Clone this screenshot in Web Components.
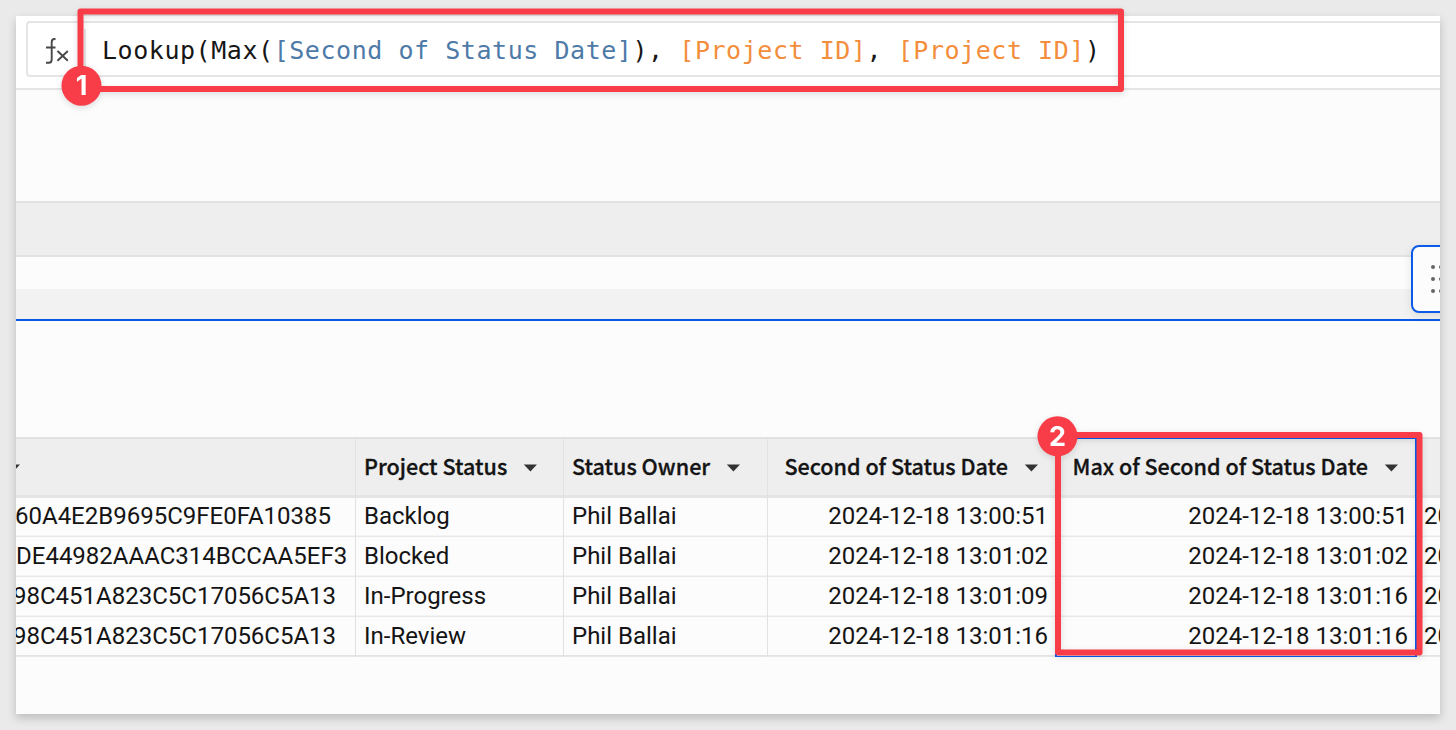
<!DOCTYPE html>
<html lang="en">
<head>
<meta charset="utf-8">
<title>Formula lookup</title>
<style>
html, body { margin: 0; height: 100%; overflow: hidden; background: #eaeaea; }
</style>
</head>
<body>
<app-page></app-page>
<script>
const define = (name, html, setup) => customElements.define(name, class extends HTMLElement {
  connectedCallback() {
    if (this.shadowRoot) return;
    const root = this.attachShadow({ mode: 'open' });
    root.innerHTML = html.trim();
    if (setup) setup(this, root);
  }
});

define('fx-icon', `
<style>:host{display:block;width:26px;height:30px} svg{display:block}</style>
<svg width="26" height="30" viewBox="0 0 26 30" fill="none" stroke="#484848" stroke-width="1.9">
<path d="M10.500 2H9.500C7.600 2 6.700 3 6.700 5v17.500c0 2.300-.9 3.300-2.800 3.300H1M1 10.500h9.500"/>
<path d="M12.500 14l10.300 9.800M22.800 14l-10.300 9.800"/>
</svg>`);

define('formula-bar', `
<style>
:host{display:flex;box-sizing:border-box;height:74px;padding:5px 0 11px 10px;background:#fff;border-bottom:2px solid #e5e5e5}
.field{flex:1;display:flex;align-items:stretch;border:2px solid #e5e5e5;border-right:0;border-radius:4px 0 0 4px}
.fx{width:58px;box-sizing:border-box;margin:6px 0;height:42px;padding:8px 0 0 17px;border-right:2px solid #e5e5e5}
.code{padding-left:16px;font:25px/52px "DejaVu Sans Mono",monospace;letter-spacing:.55px;color:#161616;white-space:pre;margin-top:2px;height:50px}
</style>
<div class="field"><div class="fx"><fx-icon></fx-icon></div><div class="code"><slot></slot></div></div>`);

define('formula-ref', `
<style>:host{display:inline;color:#4e7aa8} :host([tone=orange]){color:#f28e3c}</style><slot></slot>`);

define('drag-handle', `
<style>
:host{display:block;box-sizing:border-box;width:60px;height:68px;border:2px solid #0b5be8;border-radius:8px;background:#fcfcfc;box-shadow:0 3px 10px rgba(0,0,0,.1);padding:18px 0 0 18px}
svg{display:block}</style>
<svg width="20" height="30" fill="#666"><circle cx="2" cy="2" r="2"/><circle cx="2" cy="14" r="2"/><circle cx="2" cy="26" r="2"/><circle cx="10" cy="2" r="2"/><circle cx="10" cy="14" r="2"/><circle cx="10" cy="26" r="2"/></svg>`);

define('canvas-bands', `
<style>
:host{display:flex;flex-direction:column;height:347px;position:relative}
.a{height:111px}
.b{height:52px;background:#eee;border:solid #e2e2e2;border-width:2px 0}
.c{height:32px}
.d{height:30px;background:#f2f2f2;border-bottom:2px solid #0b58e2}
drag-handle{position:absolute;left:1395px;top:155px}
</style>
<div class="a"></div><div class="b"></div><div class="c"></div><div class="d"></div>
<drag-handle></drag-handle>`);

define('header-cell', `
<style>
:host{display:flex;align-items:center;justify-content:var(--just,flex-start);box-sizing:border-box;height:56px;font:500 21.55px/54px "Noto Sans CJK SC",sans-serif;-webkit-text-stroke:.3px #141414;color:#141414;white-space:nowrap;gap:16px;padding:0 0 0 8px}
svg{display:block;flex:none;margin-top:1px}
.t{height:56px}
</style>
<div class="t"><slot></slot></div>
<svg width="15" height="8" fill="#333"><path d="M.8.500h13.200L7.400 7.500z"/></svg>`);

define('data-cell', `
<style>
:host{display:flex;justify-content:var(--just,flex-start);box-sizing:border-box;height:40px;padding:0 8px;font:24px/39px Roboto,sans-serif;color:#141414;white-space:nowrap;border-bottom:1px solid #e8e8e8;box-shadow:inset 0 -1px #f4f4f4}
:host(:last-child){border-color:#e8e8e8;box-shadow:inset 0 -1px #e4e4e4}
</style><slot></slot>`);

define('table-column', `
<style>
:host{display:block;box-sizing:border-box;flex:none;overflow:hidden;border-right:1px solid #e2e2e2}
:host([align=right]){--just:flex-end}
.head{background:#eee;border-top:2px solid #e2e2e2;border-bottom:3px solid #e4e4e4;margin-bottom:-1px;height:56px}
</style>
<div class="head"><slot name="head"></slot></div><div class="rows"></div>`, (el, root) => {
  const rows = root.querySelector('.rows');
  const indent = { key: v => ({ DE: 0, 98: -3 }[v.slice(0, 2)] ?? -1), next: () => -1 }[el.id];
  el.getAttribute('values').split('|').forEach(v => {
    const c = document.createElement('data-cell');
    c.textContent = v;
    if (indent) c.style.textIndent = indent(v) + 'px';
    if (el.id === 'key') c.style.paddingLeft = '0';
    rows.append(c);
  });
});

define('data-table', `
<style>
:host{display:flex;width:1424px;overflow:hidden;position:relative}
.sel{position:absolute;left:1039px;top:0;width:362px;height:221px;box-sizing:border-box;border:2px solid #0b5cf0}
#key header-cell{padding:0;margin-left:-10px;}
</style>
<table-column id="key" style="width:340px" values="60A4E2B9695C9FE0FA10385|DE44982AAAC314BCCAA5EF3|98C451A823C5C17056C5A13|98C451A823C5C17056C5A13"><header-cell slot="head" style="gap:0"></header-cell></table-column>
<table-column style="width:208px" values="Backlog|Blocked|In-Progress|In-Review"><header-cell slot="head">Project Status</header-cell></table-column>
<table-column style="width:204px" values="Phil Ballai|Phil Ballai|Phil Ballai|Phil Ballai"><header-cell slot="head">Status Owner</header-cell></table-column>
<table-column align="right" style="width:289px" values="2024-12-18 13:00:51|2024-12-18 13:01:02|2024-12-18 13:01:09|2024-12-18 13:01:16"><header-cell slot="head" style="padding-right:17px">Second of Status Date</header-cell></table-column>
<table-column align="right" style="width:360px" values="2024-12-18 13:00:51|2024-12-18 13:01:02|2024-12-18 13:01:16|2024-12-18 13:01:16"><header-cell slot="head" style="padding-right:17px">Max of Second of Status Date</header-cell></table-column>
<table-column id="next" style="width:260px" values="20|20|20|20"></table-column>
<div class="sel"></div>`);

define('callout-mark', `
<style>
:host{position:absolute;left:0;top:0;width:1456px;height:730px;pointer-events:none}
svg{display:block;filter:drop-shadow(0 2px 3px rgba(0,0,0,.13))}
text{font:700 27px Inter,sans-serif;fill:#fff;text-anchor:middle}
</style>
<svg width="1456" height="730"><rect fill="none" stroke="#f83d48" stroke-width="6" stroke-linejoin="round"/><circle r="20" fill="#f83d48"/><text></text></svg>`, (el, root) => {
  const [x, y, w, h, cx, cy] = el.getAttribute('box').split(' ').map(Number);
  const set = (q, o) => Object.entries(o).forEach(([k, v]) => root.querySelector(q).setAttribute(k, v));
  set('rect', { x, y, width: w, height: h });
  set('circle', { cx, cy });
  set('text', { x: cx, y: cy + 9.3 });
  root.querySelector('text').textContent = el.getAttribute('label');
});

define('app-page', `
<style>
:host{display:block;position:relative;width:1456px;height:730px;padding:16px;box-sizing:border-box}
.shadow{box-shadow:0 4px 9px rgba(0,0,0,.2);height:698px}
.card{height:698px;background:#fcfcfc;overflow:hidden}
</style>
<div class="shadow"><div class="card">
<formula-bar>Lookup(Max(<formula-ref>[Second of Status Date]</formula-ref>), <formula-ref tone="orange">[Project ID]</formula-ref>, <formula-ref tone="orange">[Project ID]</formula-ref>)</formula-bar>
<canvas-bands></canvas-bands>
<data-table></data-table>
</div></div>
<callout-mark box="80.5 11.5 1040.500 77.5 81.5 85.7" label="1"></callout-mark>
<callout-mark box="1058 435 361.500 217.5 1057.5 436.3" label="2"></callout-mark>`);
</script>
</body>
</html>
